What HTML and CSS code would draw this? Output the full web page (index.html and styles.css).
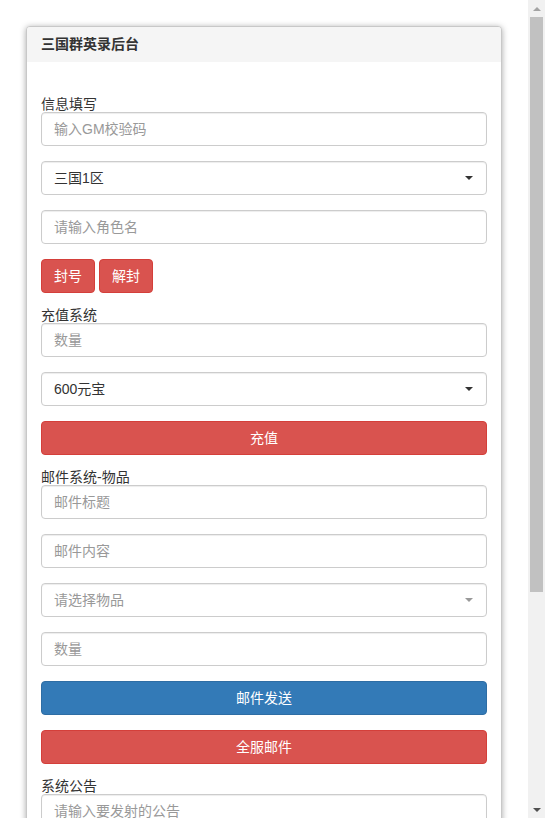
FILE: index.html
```html
<!DOCTYPE html>
<html lang="zh-CN">
<head>
<meta charset="utf-8">
<title>三国群英录后台</title>
<link rel="stylesheet" href="styles.css">
</head>
<body>
<div class="wrap">
  <div class="panel">
    <div class="panel-head">三国群英录后台</div>
    <div class="panel-body">
      <label class="lbl">信息填写</label>
      <input class="ctl" type="text" placeholder="输入GM校验码">
      <div class="sel-wrap">
        <select class="ctl sel"><option>三国1区</option><option>三国2区</option></select>
      </div>
      <input class="ctl" type="text" placeholder="请输入角色名">
      <div class="btn-row">
        <button class="btn red">封号</button>
        <button class="btn red">解封</button>
      </div>

      <label class="lbl">充值系统</label>
      <input class="ctl" type="text" placeholder="数量">
      <div class="sel-wrap">
        <select class="ctl sel"><option>600元宝</option><option>1200元宝</option></select>
      </div>
      <button class="btn red block last">充值</button>

      <label class="lbl">邮件系统-物品</label>
      <input class="ctl" type="text" placeholder="邮件标题">
      <input class="ctl" type="text" placeholder="邮件内容">
      <div class="sel-wrap muted">
        <select class="ctl sel placeholder"><option>请选择物品</option></select>
      </div>
      <input class="ctl" type="text" placeholder="数量">
      <button class="btn blue block">邮件发送</button>
      <button class="btn red block last">全服邮件</button>

      <label class="lbl">系统公告</label>
      <input class="ctl" type="text" placeholder="请输入要发射的公告">
      <button class="btn red block last">发送公告</button>

      <label class="lbl">玩家查询</label>
      <input class="ctl" type="text" placeholder="请输入角色名">
      <button class="btn blue block last">查询</button>
    </div>
  </div>
</div>
<div class="scrollbar" aria-hidden="true">
  <div class="sb-arrow up"></div>
  <div class="sb-track"><div class="sb-thumb"></div></div>
  <div class="sb-arrow down"></div>
</div>
</body>
</html>
```
FILE: styles.css
```css
html, body {
  margin: 0;
  padding: 0;
  background: #fff;
}
body {
  display: flex;
  align-items: flex-start;
  font-family: "Liberation Sans", "Noto Sans CJK SC", sans-serif;
  font-size: 14px;
  line-height: 20px;
  color: #333;
}
.wrap {
  flex: 1;
  min-width: 0;
  padding: 26px 26px 40px 26px;
}
.panel {
  border: 1px solid #c8c8c8;
  border-radius: 4px;
  box-shadow: 0 1px 6px rgba(0, 0, 0, 0.35);
  background: #fff;
  overflow: hidden;
}
.panel-head {
  height: 35px;
  line-height: 35px;
  padding: 0 14px;
  background: #f5f5f5;
  font-weight: bold;
  font-size: 14px;
  color: #333;
}
.panel-body {
  padding: 30px 14px 15px 14px;
  display: flex;
  flex-direction: column;
}
.lbl {
  display: block;
  height: 20px;
  line-height: 24px;
  font-size: 14px;
  color: #333;
}
.ctl {
  display: block;
  box-sizing: border-box;
  width: 100%;
  height: 34px;
  margin: 0 0 15px 0;
  padding: 6px 12px;
  border: 1px solid #ccc;
  border-radius: 4px;
  background: #fff;
  font-family: inherit;
  font-size: 14px;
  line-height: 20px;
  color: #555;
  box-shadow: inset 0 1px 1px rgba(0, 0, 0, 0.075);
  outline: none;
}
.ctl::placeholder {
  color: #999;
}
.sel-wrap {
  position: relative;
}
.sel {
  -webkit-appearance: none;
  appearance: none;
  color: #333;
}
.sel.placeholder {
  color: #999;
}
.sel-wrap::after {
  content: "";
  position: absolute;
  right: 14px;
  top: 15px;
  width: 0;
  height: 0;
  border-left: 4px solid transparent;
  border-right: 4px solid transparent;
  border-top: 4px solid #333;
  pointer-events: none;
}
.sel-wrap.muted::after {
  border-top-color: #999;
}
.btn-row {
  display: flex;
  gap: 4px;
  margin-bottom: 10px;
}
.btn {
  box-sizing: border-box;
  height: 34px;
  padding: 6px 12px;
  border: 1px solid transparent;
  border-radius: 4px;
  font-family: inherit;
  font-size: 14px;
  line-height: 20px;
  color: #fff;
  cursor: pointer;
}
.btn.red {
  background: #d9534f;
  border-color: #d43f3a;
}
.btn.blue {
  background: #337ab7;
  border-color: #2e6da4;
}
.btn.block {
  display: block;
  width: 100%;
  margin-bottom: 15px;
}
.btn.block.last {
  margin-bottom: 10px;
}

/* imitation of the browser's vertical scrollbar */
.scrollbar {
  position: sticky;
  top: 0;
  flex: 0 0 17px;
  width: 17px;
  height: 100vh;
  background: #f1f1f1;
  display: flex;
  flex-direction: column;
}
.sb-arrow {
  flex: 0 0 17px;
  display: flex;
  align-items: center;
  justify-content: center;
}
.sb-arrow::before {
  content: "";
  width: 0;
  height: 0;
  border-left: 4px solid transparent;
  border-right: 4px solid transparent;
}
.sb-arrow.up::before {
  border-bottom: 4px solid #a3a3a3;
}
.sb-arrow.down::before {
  border-top: 4px solid #505050;
}
.sb-track {
  flex: 1;
  padding: 0 2px;
}
.sb-thumb {
  height: 575px;
  background: #c1c1c1;
}
```
